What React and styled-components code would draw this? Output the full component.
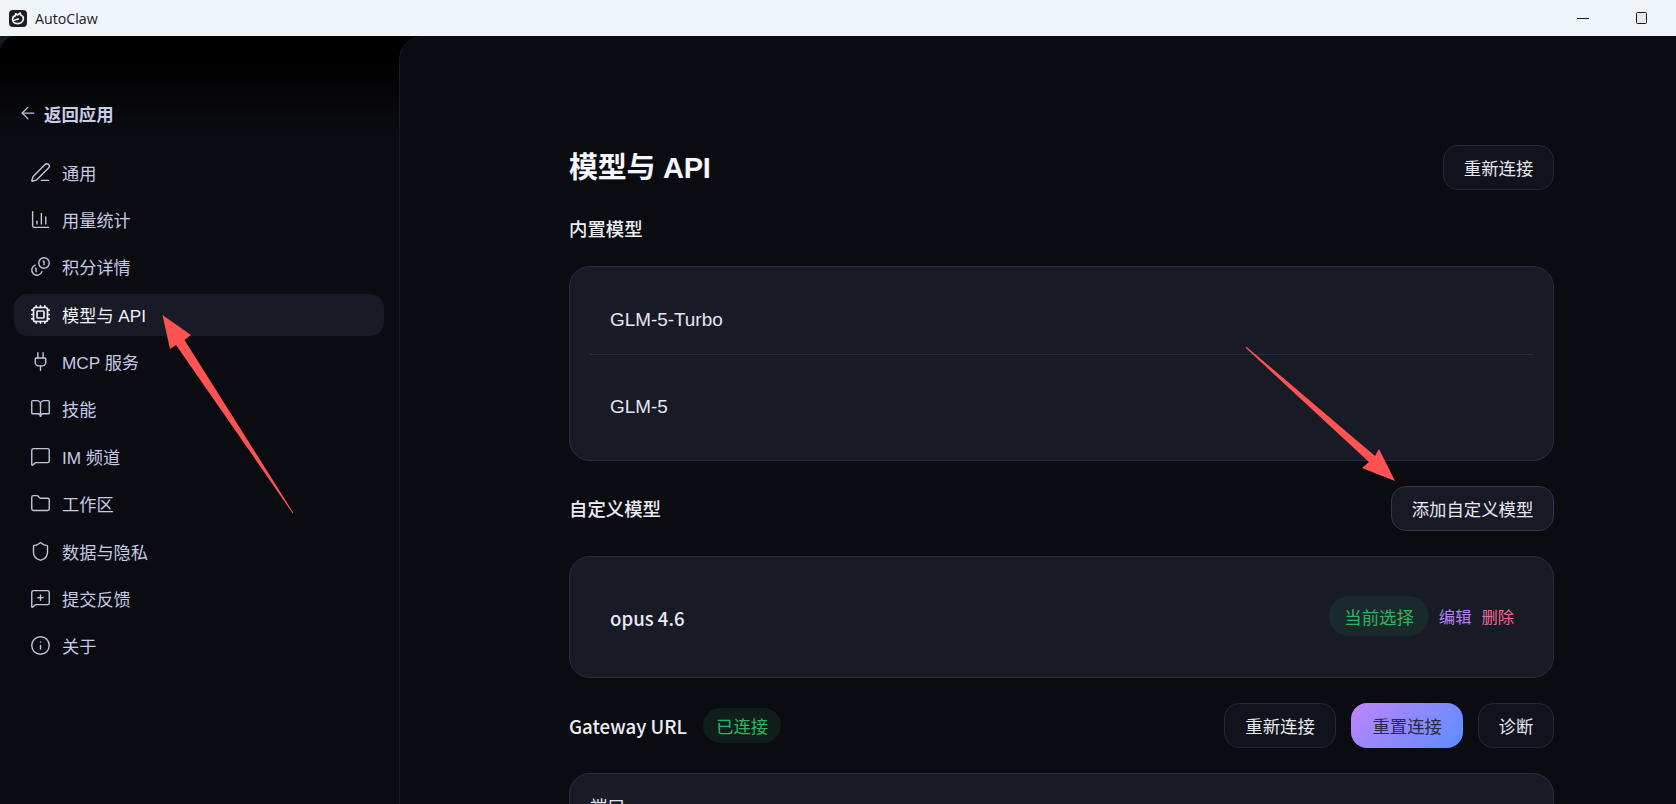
import React from 'react';
import styled, { createGlobalStyle } from 'styled-components';
import {
	ArrowLeft,
	PenLine,
	ChartColumn,
	Cpu,
	Plug,
	BookOpen,
	MessageSquare,
	Folder,
	Shield,
	MessageSquarePlus,
	Info,
} from 'lucide-react';

const Global = createGlobalStyle`
	html, body {
		margin: 0;
		padding: 0;
		background: #0b0c12;
	}
	* {
		box-sizing: border-box;
	}
	body {
		font-family: "Liberation Sans", "Noto Sans CJK SC", sans-serif;
	}
`;

const Page = styled.div`
	position: relative;
	width: 100%;
	height: 100vh;
	display: flex;
	flex-direction: column;
	overflow: hidden;
`;

const TitleBar = styled.div`
	height: 36px;
	flex: none;
	display: flex;
	align-items: center;
	padding-left: 9px;
	background: #eff4f9;
`;

const AppName = styled.span`
	margin-left: 8px;
	font-family: "Open Sans", "Noto Sans", sans-serif;
	font-size: 14.2px;
	color: #1b1b1f;
`;

const WindowButtons = styled.div`
	margin-left: auto;
	display: flex;
	align-items: center;
	padding-right: 29px;
	gap: 47px;
`;

const MinimizeIcon = styled.div`
	width: 12px;
	height: 1px;
	background: #17171a;
`;

const MaximizeIcon = styled.div`
	width: 11px;
	height: 12px;
	border: 1px solid #17171a;
	border-radius: 1.5px;
	background: #e6e8ea;
`;

const Body = styled.div`
	flex: 1;
	min-height: 0;
	display: flex;
	background: linear-gradient(90deg, #191922 0, #191922 16px, #000 16px);
`;

const Sidebar = styled.aside`
	width: 399px;
	flex: none;
	padding: 65px 15px 0 14px;
	border-top-left-radius: 16px;
	background: linear-gradient(180deg, #000 0, #000 20px, #0b0c12 100px);
`;

const BackLink = styled.div`
	height: 24px;
	display: flex;
	align-items: center;
	gap: 6px;
	padding-left: 4px;
	margin-bottom: 27px;
	color: #c8cde8;
	font-size: 17.4px;
	font-weight: 700;
	svg {
		width: 20px;
		height: 20px;
		stroke-width: 1.5;
		color: #c0c4d8;
	}
`;

const Nav = styled.nav`
	display: flex;
	flex-direction: column;
	gap: 5.4px;
`;

const NavItem = styled.div`
	height: 42px;
	display: flex;
	align-items: center;
	gap: 11px;
	padding: 0 0 2px 16px;
	border-radius: 14px;
	font-size: 17.2px;
	color: ${props => (props.active ? '#f1f2f8' : '#c5cae6')};
	background: ${props => (props.active ? '#181a26' : 'transparent')};
	svg {
		width: 21px;
		height: 21px;
		flex: none;
		stroke-width: ${props => (props.active ? 1.9 : 1.6)};
		color: ${props => (props.active ? '#eceef6' : '#c2c6da')};
	}
`;

const Main = styled.main`
	flex: 1;
	min-width: 0;
	padding: 109px 122px 0 169px;
	border-left: 1px solid #1a1b27;
	border-top-left-radius: 24px;
	background: #0b0c12;
`;

const HeaderRow = styled.div`
	display: flex;
	align-items: center;
	justify-content: space-between;
	margin-top: ${props => props.top || 0}px;
`;

const Title = styled.h1`
	margin: 0;
	font-size: 29px;
	line-height: 36px;
	font-weight: 700;
	letter-spacing: -0.25px;
	color: #f6f7fb;
`;

const SectionLabel = styled.div`
	font-size: 18.4px;
	line-height: 24px;
	font-weight: 500;
	color: #eceef5;
	margin-top: ${props => props.top || 0}px;
`;

const CustomLabel = styled(SectionLabel)`
	padding-top: 3px;
`;

const GatewayLabel = styled(SectionLabel)`
	font-family: "Noto Sans CJK SC", sans-serif;
	font-size: 18.7px;
`;

const Button = styled.button`
	height: 45px;
	padding: 0 19.6px;
	font-family: inherit;
	font-size: 17.4px;
	color: #e6e8f0;
	background: ${props => (props.raised ? '#171925' : '#11131b')};
	border: 1px solid ${props => (props.raised ? '#34364b' : '#262838')};
	border-radius: 15px;
`;

const GradientButton = styled(Button)`
	border: 0;
	padding: 0 21px;
	border-radius: 16px;
	color: #2c2a44;
	background: linear-gradient(135deg, #c084fc 0%, #5b8dff 100%);
`;

const Card = styled.section`
	margin-top: 25px;
	border: 1px solid #2a2c3e;
	border-radius: 21px;
	background: #181a26;
`;

const BuiltinCard = styled(Card)`
	margin-top: 24px;
	padding: 18px 20px;
`;

const ModelRow = styled.div`
	height: 70px;
	display: flex;
	align-items: center;
	padding-left: 20px;
	font-size: 18.9px;
	color: #e4e6f0;
	& + & {
		margin-top: 17px;
		position: relative;
		&::before {
			content: '';
			position: absolute;
			left: 0;
			right: 0;
			top: -18px;
			height: 1px;
			background: #2a2c3e;
		}
	}
`;

const CustomCard = styled(Card)`
	height: 122px;
	display: flex;
	align-items: center;
	padding: 0 39px 0 40px;
`;

const CustomName = styled.div`
	font-family: "Noto Sans CJK SC", sans-serif;
	font-size: 18.6px;
	font-weight: 500;
	color: #e9ebf4;
`;

const CustomActions = styled.div`
	margin-left: auto;
	display: flex;
	align-items: center;
	gap: 10px;
	margin-top: -2px;
`;

const Badge = styled.span`
	display: flex;
	align-items: center;
	height: ${props => (props.small ? 35 : 40)}px;
	padding: 0 ${props => (props.small ? 13 : 15)}px;
	border-radius: 20px;
	font-size: 17.4px;
	color: #30b460;
	background: ${props => (props.small ? '#0f1e1a' : '#1a2a2c')};
`;

const TextAction = styled.span`
	font-size: 16.3px;
	color: ${props => props.color};
`;

const GatewayLeft = styled.div`
	display: flex;
	align-items: center;
	gap: 16px;
`;

const GatewayButtons = styled.div`
	display: flex;
	gap: 15px;
`;

const ReconnectButton = styled(Button)`
	padding: 0 20.6px;
`;

const PortCard = styled(Card)`
	height: 200px;
	padding: 21px 20px;
	font-size: 17.4px;
	line-height: 24px;
	color: #e4e6f0;
`;

const ArrowLayer = styled.svg`
	position: absolute;
	left: 0;
	top: 0;
	width: 1676px;
	height: 804px;
	pointer-events: none;
`;

const Logo = () => (
	<svg width="18" height="17" viewBox="0 0 18 17">
		<rect width="18" height="17" rx="4" fill="#1d1d1f" />
		<path
			d="M3.6 9.8 C3.4 7.6 4.8 6.2 6.2 5.9 L6.6 3.8 L8.6 5 L11.2 3 L11.9 5.2 C13.6 5.6 14.6 7.2 14.3 9.2 C13.9 12 11.8 13.6 8.6 13.6 C5.8 13.6 3.8 12.2 3.6 9.8 Z"
			fill="none"
			stroke="#f6f6f6"
			strokeWidth="1.6"
			strokeLinejoin="round"
		/>
		<path d="M4 11 C6 9.4 8 9.8 9.8 8.8" fill="none" stroke="#f6f6f6" strokeWidth="1.6" />
	</svg>
);

// big coin sits top right in the reference, so lucide's Coins is the wrong way round
const CoinsIcon = () => (
	<svg viewBox="0 0 24 24" fill="none" stroke="currentColor" strokeLinecap="round" strokeLinejoin="round">
		<circle cx="16" cy="8" r="6" />
		<path d="M5.91 10.37A6 6 0 1 0 13.66 18" />
		<path d="M15 6h1v4" />
		<path d="m6.3 13.88.7.71v3.4" />
	</svg>
);

const navItems = [
	{ icon: PenLine, label: '通用' },
	{ icon: ChartColumn, label: '用量统计' },
	{ icon: CoinsIcon, label: '积分详情' },
	{ icon: Cpu, label: '模型与 API', active: true },
	{ icon: Plug, label: 'MCP 服务' },
	{ icon: BookOpen, label: '技能' },
	{ icon: MessageSquare, label: 'IM 频道' },
	{ icon: Folder, label: '工作区' },
	{ icon: Shield, label: '数据与隐私' },
	{ icon: MessageSquarePlus, label: '提交反馈' },
	{ icon: Info, label: '关于' },
];

const App = () => {
	return (
		<Page>
			<Global />
			<TitleBar>
				<Logo />
				<AppName>AutoClaw</AppName>
				<WindowButtons>
					<MinimizeIcon />
					<MaximizeIcon />
				</WindowButtons>
			</TitleBar>
			<Body>
				<Sidebar>
					<BackLink>
						<ArrowLeft />
						返回应用
					</BackLink>
					<Nav>
						{navItems.map(item => (
							<NavItem key={item.label} active={item.active}>
								<item.icon />
								{item.label}
							</NavItem>
						))}
					</Nav>
				</Sidebar>
				<Main>
					<HeaderRow>
						<Title>模型与 API</Title>
						<Button>重新连接</Button>
					</HeaderRow>
					<SectionLabel top={28}>内置模型</SectionLabel>
					<BuiltinCard>
						<ModelRow>GLM-5-Turbo</ModelRow>
						<ModelRow>GLM-5</ModelRow>
					</BuiltinCard>
					<HeaderRow top={25}>
						<CustomLabel>自定义模型</CustomLabel>
						<Button raised>添加自定义模型</Button>
					</HeaderRow>
					<CustomCard>
						<CustomName>opus 4.6</CustomName>
						<CustomActions>
							<Badge>当前选择</Badge>
							<TextAction color="#bb82f2">编辑</TextAction>
							<TextAction color="#ee6a96">删除</TextAction>
						</CustomActions>
					</CustomCard>
					<HeaderRow top={25}>
						<GatewayLeft>
							<GatewayLabel>Gateway URL</GatewayLabel>
							<Badge small>已连接</Badge>
						</GatewayLeft>
						<GatewayButtons>
							<ReconnectButton>重新连接</ReconnectButton>
							<GradientButton>重置连接</GradientButton>
							<Button>诊断</Button>
						</GatewayButtons>
					</HeaderRow>
					<PortCard>端口</PortCard>
				</Main>
			</Body>
			<ArrowLayer viewBox="0 0 1676 804">
				<polygon points="162.5,315 191,335 184.5,340 293.3,512.7 292.7,513.3 176,345 170,349" fill="#ff5252" />
				<polygon points="1395,481 1362,468 1369,462 1245.6,347.8 1246.5,346.8 1375,456 1379,449" fill="#ff5252" />
			</ArrowLayer>
		</Page>
	);
};

export default App;
